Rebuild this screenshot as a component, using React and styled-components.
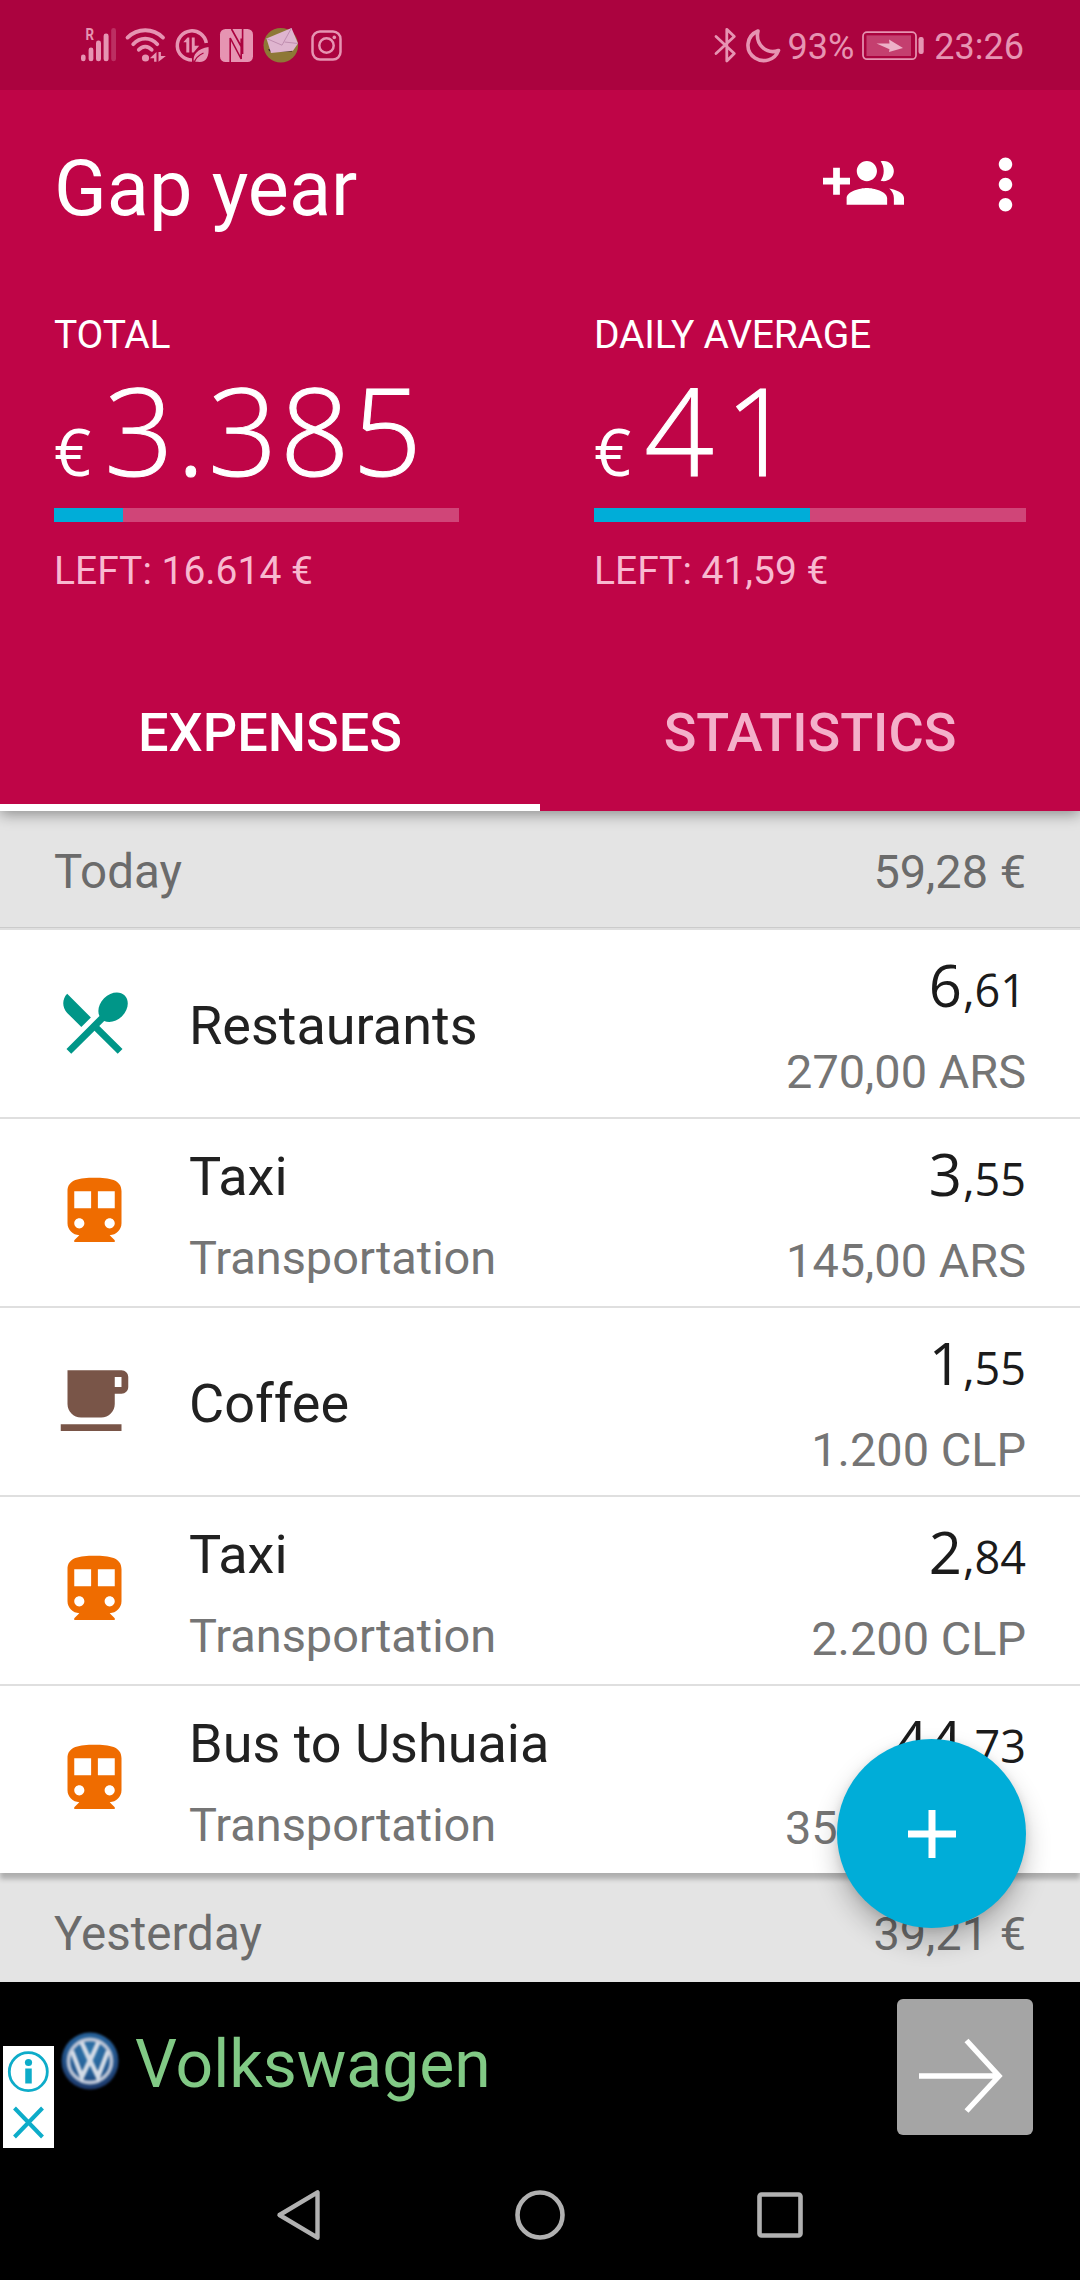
import React from "react";
import styled, { createGlobalStyle } from "styled-components";

const GlobalStyle = createGlobalStyle`
  * {
    box-sizing: border-box;
  }
  body {
    margin: 0;
    background: #000;
    font-family: Roboto, "Liberation Sans", sans-serif;
  }
  svg {
    display: block;
    flex: none;
    overflow: visible;
  }
`;

const numberFont = `"Open Sans", "Noto Sans", sans-serif`;

const Screen = styled.div`
  position: relative;
  display: flex;
  flex-direction: column;
  width: 1080px;
  height: 2280px;
  overflow: hidden;
  background: #000;
`;

const StatusBar = styled.div`
  position: relative;
  z-index: 2;
  display: flex;
  flex: none;
  justify-content: space-between;
  height: 90px;
  padding: 27px 56px 27px 80px;
  background: #ab033f;
  color: #e694b2;
`;

const StatusGroup = styled.div`
  display: flex;
  align-items: center;
  gap: ${(props) => props.$gap}px;
`;

const StatusText = styled.span`
  padding-top: 3px;
  font-size: 36px;
  line-height: 40px;
`;

const Header = styled.header`
  position: relative;
  z-index: 1;
  flex: none;
  height: 721px;
  background: #bf0547;
  color: #fff;
  box-shadow: 0 3px 14px rgba(0, 0, 0, 0.4);
`;

const Toolbar = styled.div`
  display: flex;
  align-items: center;
  height: 188px;
  padding: 0 34px 0 54px;
`;

const Title = styled.h1`
  flex: 1;
  margin: 0;
  padding-top: 10px;
  font-size: 77.5px;
  font-weight: 400;
  line-height: 92px;
`;

const ToolbarIcon = styled.svg`
  width: 81px;
  height: 81px;
  margin-left: 61px;
  fill: #fff;
`;

const Summary = styled.div`
  display: grid;
  grid-template-columns: 405px 432px;
  column-gap: 135px;
  height: 389px;
  padding: 34px 54px 0;
`;

const SummaryLabel = styled.div`
  font-size: 39px;
  line-height: 46px;
  letter-spacing: -0.2px;
`;

const BigAmount = styled.div`
  height: 150px;
  font-family: ${numberFont};
  font-size: 122px;
  font-weight: 300;
  line-height: 142px;
  letter-spacing: ${(props) => props.$tracking}px;
  white-space: nowrap;
  -webkit-text-stroke: 1px #fff;
`;

const Currency = styled.span`
  margin-right: 13px;
  font-size: 65px;
  font-weight: 400;
  line-height: 1;
  letter-spacing: 0;
  -webkit-text-stroke: 0;
`;

const Track = styled.div`
  height: 14px;
  background: #d04578;
`;

const Fill = styled.div`
  height: 100%;
  background: #00add8;
`;

const Left = styled.div`
  margin-top: 26px;
  color: #f8b9d0;
  font-size: 39px;
  line-height: 46px;
`;

const Tabs = styled.nav`
  display: grid;
  grid-template-columns: 1fr 1fr;
`;

const Tab = styled.div`
  height: 144px;
  border-bottom: 7px solid ${(props) => (props.$active ? "#fff" : "transparent")};
  color: ${(props) => (props.$active ? "#fff" : "#f4b0ca")};
  font-size: 54px;
  font-weight: 500;
  line-height: 131px;
  text-align: center;
`;

const List = styled.main`
  height: 1171px;
  overflow: hidden;
  flex: none;
  background: #e4e4e4;
`;

const DayHeader = styled.div`
  display: flex;
  align-items: center;
  justify-content: space-between;
  height: 117px;
  padding: 5px 54px 0;
  border-bottom: 1px solid #cbcbcb;
  background: #e4e4e4;
  color: #6b6b6b;
  font-size: 46.9px;
`;

const DayName = styled.span`
  font-size: 47.5px;
`;

const Rows = styled.div`
  position: relative;
  box-shadow: 0 6px 5px rgba(0, 0, 0, 0.24);
`;

const Row = styled.div`
  display: flex;
  height: 189px;
  padding: 0 54px;
  border-top: 2px solid #dfdfdf;
  background: #fff;
`;

const CategoryIcon = styled.svg`
  width: 81px;
  height: 81px;
  margin: 52px 54px 0 0;
  fill: ${(props) => props.$color};
`;

const Names = styled.div`
  display: flex;
  flex: 1;
  flex-direction: column;
  justify-content: center;
  gap: 20px;
  padding: 25px 0 20px;
`;

const Name = styled.div`
  color: #212121;
  font-size: 54px;
  line-height: 66px;
`;

const Note = styled.div`
  color: #757575;
  font-size: 46.9px;
  line-height: 56px;
`;

const Amounts = styled.div`
  display: flex;
  flex-direction: column;
  align-items: flex-end;
  gap: 28px;
  padding-top: 22px;
`;

const Amount = styled.div`
  height: 64px;
  color: #1b1b1b;
  font-family: ${numberFont};
  font-size: 58px;
  font-weight: 450;
  line-height: 65px;
  letter-spacing: 1px;
`;

const Cents = styled.span`
  font-size: 45px;
  font-weight: 450;
  line-height: 1;
  letter-spacing: 0;
`;

const Fab = styled.button`
  position: absolute;
  z-index: 2;
  top: 1739px;
  left: 837px;
  display: flex;
  align-items: center;
  justify-content: center;
  width: 189px;
  height: 189px;
  padding: 0;
  border: 0;
  border-radius: 50%;
  background: #00add8;
  box-shadow: 0 14px 26px rgba(0, 0, 0, 0.24), 0 2px 8px rgba(0, 0, 0, 0.1);
`;

const AdBanner = styled.aside`
  position: relative;
  z-index: 3;
  display: flex;
  flex: none;
  height: 178px;
  padding-left: 3px;
  background: #000;
`;

const AdChoices = styled.div`
  display: flex;
  flex-direction: column;
  align-items: center;
  width: 51px;
  height: 102px;
  margin-top: 64px;
  background: #fff;
`;

const AdLogo = styled.svg`
  width: 58px;
  height: 58px;
  margin: 50px 0 0 7px;
  filter: blur(1px);
`;

const AdTitle = styled.div`
  flex: 1;
  margin: 43px 0 0 16px;
  color: #81c985;
  font-size: 66px;
  line-height: 80px;
`;

const AdButton = styled.div`
  width: 136px;
  height: 136px;
  margin: 17px 47px 0 0;
  border-radius: 6px;
  background: #a5a5a5;
`;

const NavBar = styled.div`
  display: flex;
  flex: none;
  justify-content: center;
  gap: 190px;
  height: 120px;
  padding-top: 30px;
`;

const paths = {
  dining:
    "M8.1 13.34l2.83-2.83L3.91 3.5c-1.56 1.56-1.56 4.09 0 5.66l4.19 4.18zm6.78-1.81c1.53.71 3.68.21 5.27-1.38 1.91-1.91 2.28-4.65.81-6.12-1.46-1.46-4.2-1.1-6.12.81-1.59 1.59-2.09 3.74-1.38 5.27L3.7 19.87l1.41 1.41L12 14.41l6.88 6.88 1.41-1.41L13.41 13l1.47-1.47z",
  train:
    "M12 2c-4.42 0-8 .5-8 4v9.5C4 17.43 5.57 19 7.5 19L6 20.5v.5h12v-.5L16.5 19c1.93 0 3.5-1.57 3.5-3.5V6c0-3.5-3.58-4-8-4zM7.5 17c-.83 0-1.5-.67-1.5-1.5S6.67 14 7.5 14s1.5.67 1.5 1.5S8.33 17 7.5 17zm3.5-6H6V6h5v5zm5.5 6c-.83 0-1.5-.67-1.5-1.5s.67-1.5 1.5-1.5 1.5.67 1.5 1.5-.67 1.5-1.5 1.5zm1.5-6h-5V6h5v5z",
  cafe:
    "M20 3H4v10c0 2.21 1.79 4 4 4h6c2.21 0 4-1.79 4-4v-3h2c1.11 0 2-.89 2-2V5c0-1.11-.89-2-2-2zm0 5h-2V5h2v3zM2 21h18v-2H2v2z",
  groupAdd:
    "M8 10H5V7H3v3H0v2h3v3h2v-3h3v-2zm10 1c1.66 0 2.99-1.34 2.99-3S19.66 5 18 5c-.32 0-.63.05-.91.14.57.81.9 1.79.9 2.86s-.34 2.04-.9 2.86c.28.09.59.14.91.14zm-5 0c1.66 0 2.99-1.34 2.99-3S14.66 5 13 5c-1.66 0-3 1.34-3 3s1.34 3 3 3zm6.62 2.16c.83.73 1.38 1.66 1.38 2.84v2h3v-2c0-1.54-2.37-2.49-4.38-2.84zM13 13c-2 0-6 1-6 3v2h12v-2c0-2-4-3-6-3z",
  more:
    "M12 8c1.1 0 2-.9 2-2s-.9-2-2-2-2 .9-2 2 .9 2 2 2zm0 2c-1.1 0-2 .9-2 2s.9 2 2 2 2-.9 2-2-.9-2-2-2zm0 6c-1.1 0-2 .9-2 2s.9 2 2 2 2-.9 2-2-.9-2-2-2z",
};

const categories = {
  dining: "#009688",
  train: "#ef6c00",
  cafe: "#795548",
};

const expenses = [
  { icon: "dining", name: "Restaurants", whole: "6", cents: "61", local: "270,00 ARS" },
  { icon: "train", name: "Taxi", note: "Transportation", whole: "3", cents: "55", local: "145,00 ARS" },
  { icon: "cafe", name: "Coffee", whole: "1", cents: "55", local: "1.200 CLP" },
  { icon: "train", name: "Taxi", note: "Transportation", whole: "2", cents: "84", local: "2.200 CLP" },
  { icon: "train", name: "Bus to Ushuaia", note: "Transportation", whole: "44", cents: "73", local: "35.000 CLP" },
];

function SystemIcons() {
  return (
    <StatusGroup $gap={9}>
      {/* signal */}
      <svg width="36" height="36" viewBox="0 0 36 36" fill="currentColor">
        <text x="5.4" y="12.8" fontSize="16" fontWeight="700" textLength="8.5" lengthAdjust="spacingAndGlyphs">R</text>
        <rect x="1" y="27.5" width="4.6" height="6.8" rx="2.3" />
        <rect x="8.6" y="20.5" width="4.8" height="13.8" rx="2.4" />
        <rect x="16" y="13.5" width="5" height="20.8" rx="2.4" />
        <rect x="23.6" y="6.5" width="5" height="27.8" rx="2.4" />
        <rect x="31.2" y="1" width="4.8" height="33.3" rx="2.4" opacity="0.3" />
      </svg>
      {/* wifi */}
      <svg width="41" height="36" viewBox="0 0 41 36" fill="none" stroke="currentColor" strokeWidth="3.8" strokeLinecap="round">
        <path d="M2.5 10.6C12.5 .8 28 .8 38 10.6" />
        <path d="M8.2 17.2C15 9.8 25.5 9.8 32.3 17.2" />
        <path d="M13.8 22.8C17.5 18.6 23 18.6 26.7 22.8" />
        <circle cx="20.5" cy="31" r="3.6" fill="currentColor" stroke="none" />
        <path d="M31.5 25v9.8h-2.4v-3.5h-4.3zM33.5 34.8V25h2.4v4h5z" fill="currentColor" stroke="none" />
      </svg>
      {/* data saver */}
      <svg width="34" height="36" viewBox="0 0 34 36" fill="none" stroke="currentColor" strokeWidth="3.5">
        <path d="M17 33A14.6 14.6 0 1 1 31.3 16" />
        <path d="M14.3 25.5V10.5h-1.8l-4.2 4.7h3v10.3zM16.8 10.5v15h1.8l5.6-6.8h-4.5v-8.2z" fill="currentColor" stroke="none" />
        <path d="M33.5 20c.8 9-2 15-9 15-2 0-4-.5-5.5 0-2-7 4-13.5 14.5-15z" fill="currentColor" stroke="none" />
        <path d="M19 36c1.5-5 5-8 9.5-10" stroke="#ab033f" strokeWidth="1.3" />
      </svg>
      {/* nfc */}
      <svg width="35" height="36" viewBox="0 0 35 36" fill="none">
        <rect x="2" y="2" width="33" height="33" rx="5.5" fill="currentColor" />
        <path d="M12.2 35V11l11 21V11.5M13.5 2l10.5 19M24.6 2v25" stroke="#ab033f" strokeWidth="1.6" />
      </svg>
      {/* mail */}
      <svg width="38" height="36" viewBox="0 0 38 36">
        <circle cx="18.8" cy="18.3" r="17.3" fill="#8e7836" />
        <path d="M6 22.5l24-4v6H8z" fill="#2c1c20" />
        <path d="M4.5 11.5L29.5 1l6.5 15.5-5 7.2-22 2.2z" fill="#dfb5cf" />
        <path d="M4.5 11.5L20 18.2 29.5 1M36 16.5L22.5 15" fill="none" stroke="#c08fb0" strokeWidth="1" />
      </svg>
      {/* instagram */}
      <svg width="34" height="36" viewBox="0 0 34 36" fill="none" stroke="currentColor" strokeWidth="2.5">
        <rect x="3.5" y="4.5" width="28" height="28" rx="7.5" />
        <circle cx="17.5" cy="18.5" r="7.2" />
        <circle cx="25.3" cy="10.4" r="1.8" fill="currentColor" stroke="none" />
      </svg>
    </StatusGroup>
  );
}

function SystemStatus() {
  return (
    <StatusGroup $gap={7}>
      <svg width="26" height="36" viewBox="0 0 26 36" fill="none" stroke="currentColor" strokeWidth="2.8" strokeLinejoin="round" strokeLinecap="round">
        <path d="M2 9.5l18.3 17L12.8 34V2.3l7.5 7.2L2 26.5" />
      </svg>
      <svg width="34" height="36" viewBox="0 0 34 36" fill="none" stroke="currentColor" strokeWidth="3.6" strokeLinejoin="round">
        <path d="M11 4C-1 9-2.5 24 8 31c8.500 5.500 20 2 23.500-7.500C19 28 8 17 11 4z" />
      </svg>
      <StatusText>93%</StatusText>
      <svg width="66" height="36" viewBox="0 0 66 36" fill="currentColor">
        <rect x="2" y="5.2" width="53" height="27" rx="4" fill="none" stroke="currentColor" strokeWidth="1.7" />
        <rect x="5.5" y="8.4" width="44.5" height="20.6" opacity="0.42" />
        <path d="M15.5 16.5l13 5.7-.5 2.800 14-4-14-8.500 .5 4z" fill="#edb1c8" />
        <rect x="57.5" y="10" width="5.2" height="17" rx="2.2" />
      </svg>
      <StatusText>23:26</StatusText>
    </StatusGroup>
  );
}

function Budget({ label, amount, tracking, left, progress }) {
  return (
    <div>
      <SummaryLabel>{label}</SummaryLabel>
      <BigAmount $tracking={tracking}>
        <Currency>€</Currency>
        {amount}
      </BigAmount>
      <Track>
        <Fill style={{ width: `${progress}%` }} />
      </Track>
      <Left>LEFT: {left} €</Left>
    </div>
  );
}

function Expense({ icon, name, note, whole, cents, local }) {
  return (
    <Row>
      <CategoryIcon viewBox="0 0 24 24" $color={categories[icon]}>
        <path d={paths[icon]} />
      </CategoryIcon>
      <Names>
        <Name>{name}</Name>
        {note && <Note>{note}</Note>}
      </Names>
      <Amounts>
        <Amount>
          {whole}
          <Cents>,{cents}</Cents>
        </Amount>
        <Note>{local}</Note>
      </Amounts>
    </Row>
  );
}

function Ad() {
  return (
    <AdBanner>
      <AdChoices>
        <svg width="51" height="102" viewBox="0 0 51 102" fill="none" stroke="#0dacc9" strokeWidth="2.8">
          <circle cx="25.3" cy="25.7" r="19" />
          <circle cx="25.5" cy="16.5" r="3.6" fill="#0dacc9" stroke="none" />
          <path d="M25.5 22.5v15" strokeWidth="6.5" />
          <path d="M11.5 62l28 29M39.5 62l-28 29" strokeWidth="4" />
        </svg>
      </AdChoices>
      <AdLogo viewBox="0 0 58 58" fill="none">
        <defs>
          <radialGradient id="badge" cx="0.5" cy="0.35" r="0.65">
            <stop offset="0" stopColor="#2f77ac" />
            <stop offset="0.6" stopColor="#245a92" />
            <stop offset="1" stopColor="#1c3667" />
          </radialGradient>
        </defs>
        <circle cx="29" cy="29" r="28.5" fill="url(#badge)" />
        <circle cx="29" cy="29" r="21.5" stroke="#b7c1d3" strokeWidth="3.8" />
        <path d="M20.5 10l8.5 19 8.5-19" stroke="#d3dbe6" strokeWidth="4.5" />
        <path d="M11 19l10 26 8-17 8 17 10-26" stroke="#d3dbe6" strokeWidth="4.5" />
      </AdLogo>
      <AdTitle>Volkswagen</AdTitle>
      <AdButton>
        <svg width="136" height="136" viewBox="0 0 136 136" fill="none" stroke="#fff" strokeWidth="5.4">
          <path d="M22 77h80M69.5 41.5l32.5 35.5-32.5 35" />
        </svg>
      </AdButton>
    </AdBanner>
  );
}

export default function App() {
  return (
    <Screen>
      <GlobalStyle />
      <StatusBar>
        <SystemIcons />
        <SystemStatus />
      </StatusBar>

      <Header>
        <Toolbar>
          <Title>Gap year</Title>
          <ToolbarIcon viewBox="0 0 24 24">
            <path d={paths.groupAdd} />
          </ToolbarIcon>
          <ToolbarIcon viewBox="0 0 24 24">
            <path d={paths.more} />
          </ToolbarIcon>
        </Toolbar>
        <Summary>
          <Budget label="TOTAL" amount="3.385" tracking={2.5} left="16.614" progress={17} />
          <Budget label="DAILY AVERAGE" amount="41" tracking={11} left="41,59" progress={50} />
        </Summary>
        <Tabs>
          <Tab $active>EXPENSES</Tab>
          <Tab>STATISTICS</Tab>
        </Tabs>
      </Header>

      <List>
        <DayHeader>
          <DayName>Today</DayName>
          <span>59,28 €</span>
        </DayHeader>
        <Rows>
          {expenses.map((expense, i) => (
            <Expense key={i} {...expense} />
          ))}
        </Rows>
        <DayHeader>
          <DayName>Yesterday</DayName>
          <span>39,21 €</span>
        </DayHeader>
      </List>

      <Fab>
        <svg width="48" height="48" viewBox="0 0 48 48" stroke="#fff" strokeWidth="7">
          <path d="M24 0v48M0 24h48" />
        </svg>
      </Fab>

      <Ad />

      <NavBar>
        <svg width="50" height="50" viewBox="0 0 50 50" fill="none" stroke="#b1b1b1" strokeWidth="4.4" strokeLinejoin="round">
          <path d="M4.5 25L42.5 2.3v45.4z" />
        </svg>
        <svg width="50" height="50" viewBox="0 0 50 50" fill="none" stroke="#b1b1b1" strokeWidth="4.6">
          <circle cx="25" cy="25" r="22.5" />
        </svg>
        <svg width="50" height="50" viewBox="0 0 50 50" fill="none" stroke="#b1b1b1" strokeWidth="4.6">
          <rect x="4.5" y="4.5" width="41" height="41" rx="2" />
        </svg>
      </NavBar>
    </Screen>
  );
}
